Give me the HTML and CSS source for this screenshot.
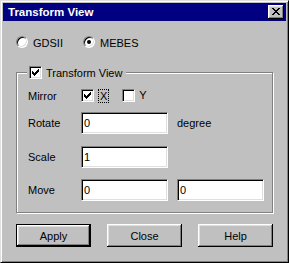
FILE: index.html
```html
<!DOCTYPE html>
<html lang="en">
<head>
  <meta charset="UTF-8">
  <title>Transform View</title>
  <link rel="stylesheet" href="styles.css">
</head>
<body>
  <div class="window">
    <div class="titlebar">
      <span class="title">Transform View</span>
      <button class="close-btn" title="Close">
        <svg width="8" height="7" viewBox="0 0 8 7" shape-rendering="crispEdges"><path d="M0 0h2v1h-2zM6 0h2v1h-2zM1 1h2v1h-2zM5 1h2v1h-2zM2 2h4v1h-4zM3 3h2v1h-2zM2 4h4v1h-4zM1 5h2v1h-2zM5 5h2v1h-2zM0 6h2v1h-2zM6 6h2v1h-2z" fill="#000"/></svg>
      </button>
    </div>

    <div class="content">
      <div class="radio-row">
        <label class="radio"><span class="radio-dot"></span><span class="radio-text">GDSII</span></label>
        <label class="radio"><span class="radio-dot checked"></span><span class="radio-text">MEBES</span></label>
      </div>

      <div class="group">
        <div class="group-title">
          <span class="check">
            <svg width="7" height="7" viewBox="0 0 7 7" shape-rendering="crispEdges"><path d="M6 0h1v1h-1zM5 1h2v1h-2zM0 2h1v1h-1zM4 2h3v1h-3zM0 3h2v1h-2zM3 3h3v1h-3zM0 4h5v1h-5zM1 5h3v1h-3zM2 6h1v1h-1z" fill="#000"/></svg>
          </span>
          <span>Transform View</span>
        </div>

        <div class="row row-mirror">
          <span class="row-label">Mirror</span>
          <label class="check-item">
            <span class="check">
              <svg width="7" height="7" viewBox="0 0 7 7" shape-rendering="crispEdges"><path d="M6 0h1v1h-1zM5 1h2v1h-2zM0 2h1v1h-1zM4 2h3v1h-3zM0 3h2v1h-2zM3 3h3v1h-3zM0 4h5v1h-5zM1 5h3v1h-3zM2 6h1v1h-1z" fill="#000"/></svg>
            </span>
            <span class="focus">X</span>
          </label>
          <label class="check-item check-y">
            <span class="check"></span>
            <span>Y</span>
          </label>
        </div>

        <div class="row row-rotate">
          <span class="row-label">Rotate</span>
          <input class="field" type="text" value="0">
          <span class="unit">degree</span>
        </div>

        <div class="row row-scale">
          <span class="row-label">Scale</span>
          <input class="field" type="text" value="1">
        </div>

        <div class="row row-move">
          <span class="row-label">Move</span>
          <input class="field" type="text" value="0">
          <input class="field field-second" type="text" value="0">
        </div>
      </div>

      <div class="buttons">
        <button class="btn btn-default">Apply</button>
        <button class="btn">Close</button>
        <button class="btn">Help</button>
      </div>
    </div>
  </div>
</body>
</html>
```

FILE: styles.css
```css
* {
  box-sizing: border-box;
  margin: 0;
  padding: 0;
}

body {
  font-family: "Liberation Sans", Arial, sans-serif;
  font-size: 11px;
  color: #000;
  background: #c0c0c0;
}

.window {
  width: 289px;
  height: 263px;
  background: #c0c0c0;
  border: 1px solid;
  border-color: #dfdfdf #000 #000 #dfdfdf;
  box-shadow: inset 1px 1px #fff, inset -1px -1px #808080;
  padding: 2px;
}

/* Заголовок окна */
.titlebar {
  height: 18px;
  background: #000080;
  color: #fff;
  display: flex;
  align-items: center;
  justify-content: space-between;
  padding: 0 2px 0 5px;
}

.title {
  font-weight: bold;
  font-size: 11.5px;
}

.close-btn {
  width: 16px;
  height: 14px;
  border: none;
  background: #c0c0c0;
  box-shadow: inset -1px -1px #000, inset 1px 1px #fff, inset -2px -2px #808080, inset 2px 2px #dfdfdf;
  display: flex;
  align-items: center;
  justify-content: center;
  padding-bottom: 1px;
}

.close-btn svg {
  display: block;
}

.content {
  padding: 15px 13px 0;
}

/* Переключатели */
.radio-row {
  display: flex;
  height: 12px;
  align-items: center;
}

.radio {
  display: flex;
  align-items: center;
  gap: 5px;
  width: 67px;
  line-height: 12px;
}

.radio-text {
  padding-top: 1px;
}

.radio-dot {
  width: 12px;
  height: 12px;
  border-radius: 50%;
  background: #fff;
  border: 1px solid;
  border-color: #808080 #fff #fff #808080;
  box-shadow: inset 1px 1px #000, inset -1px -1px #dfdfdf;
  display: flex;
  align-items: center;
  justify-content: center;
}

.radio-dot.checked::after {
  content: "";
  width: 4px;
  height: 4px;
  border-radius: 50%;
  background: #000;
}

/* Рамка группы */
.group {
  margin-top: 24px;
  border: 1px solid #808080;
  box-shadow: inset 1px 1px #fff, 1px 1px #fff;
  display: flex;
  flex-direction: column;
  padding: 0 11px 11px 11px;
}

.group-title {
  align-self: flex-start;
  display: flex;
  align-items: center;
  gap: 4px;
  height: 13px;
  margin: -7px 0 0 -1px;
  padding: 0 4px 0 2px;
  background: #c0c0c0;
}

.check {
  flex-shrink: 0;
  width: 13px;
  height: 13px;
  background: #fff;
  border: 1px solid;
  border-color: #808080 #fff #fff #808080;
  box-shadow: inset 1px 1px #000, inset -1px -1px #dfdfdf;
  display: flex;
  align-items: center;
  justify-content: center;
}

.check svg {
  display: block;
}

.row {
  display: flex;
  align-items: center;
  height: 22px;
}

.row-label {
  flex-shrink: 0;
  width: 53px;
}

.row-mirror {
  margin-top: 10px;
  height: 13px;
}

.row-rotate {
  margin-top: 10px;
}

.row-scale {
  margin-top: 12px;
}

.row-move {
  margin-top: 11px;
}

.check-item {
  display: flex;
  align-items: center;
  gap: 4px;
  line-height: 13px;
}

.check-y {
  margin-left: 13px;
}

.focus {
  border: 1px dotted #000;
  padding: 0 1px;
  line-height: 12px;
}

.field {
  flex-shrink: 0;
  width: 87px;
  height: 22px;
  font: inherit;
  color: #000;
  background: #fff;
  border: 1px solid;
  border-color: #808080 #fff #fff #808080;
  box-shadow: inset 1px 1px #000, inset -1px -1px #dfdfdf;
  padding: 0 2px;
  outline: none;
}

.unit,
.field-second {
  margin-left: 9px;
}

/* Кнопки */
.buttons {
  display: flex;
  gap: 16px;
  margin-top: 11px;
}

.btn {
  width: 75px;
  height: 23px;
  font: inherit;
  color: #000;
  background: #c0c0c0;
  border: none;
  box-shadow: inset -1px -1px #000, inset 1px 1px #fff, inset -2px -2px #808080, inset 2px 2px #dfdfdf;
}

.btn-default {
  border: 1px solid #000;
}
```
